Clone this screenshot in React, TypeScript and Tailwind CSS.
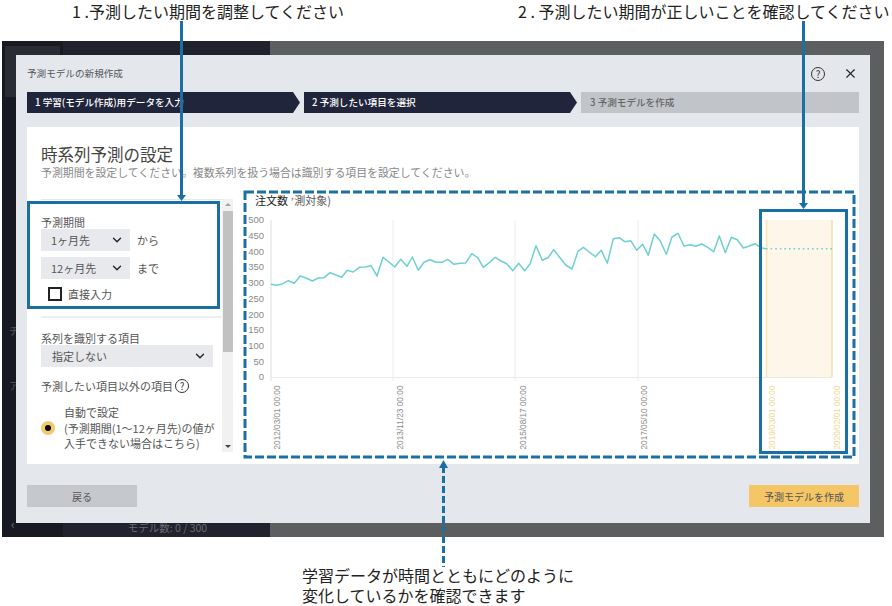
import { ChevronDown, X } from 'lucide-react'

const font = '[font-family:"Noto_Sans_CJK_JP","Liberation_Sans",sans-serif]'

const linePoints =
  '271,284.3 277,285.3 282.7,283.7 288.3,280.7 294.3,283.3 300.3,276 306,278 312.3,281 318.3,278 324,277.7 330,272.7 336,275 341.7,277.3 347.3,270.3 353.3,272 359.3,267.3 365,267 371,265.7 377,276 383,257.3 389,262 394.7,267 400.7,259.3 407,266.3 412.3,257 418.3,270.3 424,262.3 430,259.7 436,262.3 442,262.3 447.7,259.3 454,264.3 460,263.3 465.7,263 471.7,253.7 477.7,257.7 483.3,267.3 489.3,262.7 495,257.3 501,261 506.7,263.7 512.7,270.7 518.7,263.3 524.7,270.7 530,264 536,245.7 542.3,260.3 548,257.7 553.7,249.7 560,257.7 565.7,265 572,269 578,251.3 583.3,247.3 589.3,252 595.3,256.7 601.3,250.3 607.3,263.3 613.3,238.7 619.3,237.7 624.7,241.7 630.7,240.7 636.7,250.3 642.7,244.3 648.3,255.3 654.3,234 660.3,241 666.3,254.3 672,237 678,233.3 684,246 690,244.7 695.7,246.3 701.7,244 707.7,247.3 713.7,251.7 719.3,236 725.3,252.7 731.3,237.3 737.3,239.7 743.3,248 749.3,246 755,243.7 761,247.7 766,248.7'

const yTicks = [500, 450, 400, 350, 300, 250, 200, 150, 100, 50, 0]
const gridLines = [393, 515, 638]
const xLabels = [
  { x: 279.5, text: '2012/03/01 00:00', color: '#8a8a8a' },
  { x: 402.5, text: '2013/11/23 00:00', color: '#8a8a8a' },
  { x: 525.5, text: '2015/08/17 00:00', color: '#8a8a8a' },
  { x: 646.5, text: '2017/05/10 00:00', color: '#8a8a8a' },
  { x: 775, text: '2019/03/01 00:00', color: '#f3d48c' },
  { x: 840, text: '2020/02/01 00:00', color: '#f3d48c' },
]

function Chart() {
  return (
    <svg width="611" height="266" viewBox="244 192 611 266" className="ml-[11px] shrink-0">
      <rect x="766" y="220" width="66" height="157" fill="#fdf6e9" />
      <line x1="766.5" y1="220" x2="766.5" y2="377" stroke="#f9e3ae" strokeWidth="1.5" />
      <line x1="832" y1="220" x2="832" y2="377" stroke="#f0dfb4" strokeWidth="1.5" />
      <line x1="271" y1="220" x2="271" y2="381" stroke="#e8e8e8" strokeWidth="1.5" />
      {gridLines.map((x) => (
        <line key={x} x1={x} y1="220" x2={x} y2="381" stroke="#ececec" />
      ))}
      <line x1="271" y1="377.5" x2="832" y2="377.5" stroke="#e8e8e8" />
      <polyline points={linePoints} fill="none" stroke="#6fd0d2" strokeWidth="1.5" strokeLinejoin="round" />
      <line x1="766" y1="248.7" x2="832" y2="248.7" stroke="#6fd0d2" strokeWidth="1.5" strokeDasharray="1.6 3" />
      {yTicks.map((tick, i) => (
        <text key={tick} x="264" y={223.2 + i * 15.72} textAnchor="end" fontSize="9.5" fill="#8a8a8a" fontFamily="Liberation Sans">
          {tick}
        </text>
      ))}
      {xLabels.map((label) => (
        <text
          key={label.text}
          transform={`translate(${label.x} 385.5) rotate(-90)`}
          textAnchor="end"
          fontSize="9.6"
          textLength="64"
          lengthAdjust="spacingAndGlyphs"
          fill={label.color}
          fontFamily="Liberation Sans"
        >
          {label.text}
        </text>
      ))}
      <text x="255" y="204.5" fontSize="11" fill="#222" fontFamily="Noto Sans CJK JP">
        注文数 <tspan fill="#555">ʼ測対象)</tspan>
      </text>
    </svg>
  )
}

function SelectBox({ label, width, pad }: { label: string; width: string; pad: string }) {
  return (
    <div className={`flex h-[22px] items-center justify-between bg-[#e7e9ed] pr-[6px] text-[11px] text-[#555] ${width} ${pad}`}>
      <span>{label}</span>
      <ChevronDown size={14} strokeWidth={2.4} className="text-[#222]" />
    </div>
  )
}

function HelpIcon({ size, text }: { size: string; text: string }) {
  return (
    <span className={`flex items-center justify-center rounded-full border border-[#333] leading-none text-[#333] ${size} ${text}`}>?</span>
  )
}

function SettingsColumn() {
  return (
    <div className="relative mt-[7px] h-[253px] w-[192px] shrink-0 overflow-hidden text-[11px] text-[#555]">
      <div className="w-[181px] border-t border-[#e8e8e8]">
        <div className="w-[172px]">
          <p className="mt-[15px] h-[14px] leading-[14px]">予測期間</p>
          <div className="flex items-center gap-[7px]">
            <SelectBox label="1ヶ月先" width="w-[89px]" pad="pl-[10px]" />
            <span>から</span>
          </div>
          <div className="mt-[6px] flex items-center gap-[7px]">
            <SelectBox label="12ヶ月先" width="w-[89px]" pad="pl-[10px]" />
            <span>まで</span>
          </div>
          <div className="mt-[8px] flex items-center gap-[6px] pl-[7px]">
            <span className="h-[14px] w-[14px] border-2 border-[#222] bg-white" />
            <span className="leading-[14px]">直接入力</span>
          </div>
        </div>
        <div className="mt-[15px] border-t-2 border-[#eeeeee]" />
        <div className="w-[172px]">
          <p className="mt-[13px] h-[14px] leading-[14px]">系列を識別する項目</p>
          <SelectBox label="指定しない" width="w-[172px]" pad="pl-[11px]" />
          <div className="mt-[12px] flex h-[14px] items-center gap-[2px]">
            <span>予測したい項目以外の項目</span>
            <HelpIcon size="h-[14px] w-[14px]" text="text-[10px]" />
          </div>
          <div className="mt-[12px] flex items-center gap-[9px] pl-0 leading-[15.5px]">
            <span className="flex h-[14px] w-[14px] shrink-0 items-center justify-center rounded-full bg-[#f4c872]">
              <span className="h-[6px] w-[6px] rounded-full bg-black" />
            </span>
            <p className="whitespace-nowrap">
              自動で設定
              <br />
              (予測期間(1〜12ヶ月先)の値が
              <br />
              入手できない場合はこちら)
            </p>
          </div>
        </div>
      </div>
      <div className="absolute top-0 right-0 flex h-full w-[11px] flex-col items-center justify-between bg-[#f1f1f1] py-[4px]">
        <span className="h-0 w-0 border-x-[3px] border-b-[3px] border-x-transparent border-b-[#a3a3a3]" />
        <span className="absolute top-[12px] left-[1px] h-[141px] w-[10px] bg-[#c1c1c1]" />
        <span className="h-0 w-0 border-x-[3px] border-t-[3px] border-x-transparent border-t-[#444]" />
      </div>
    </div>
  )
}

function Modal() {
  return (
    <div className="absolute top-[14px] left-[14px] flex h-[468px] w-[854px] flex-col bg-[#e4e7ec] px-[11px]">
      <div className="flex h-[37px] items-center justify-between">
        <span className="text-[9.6px] text-[#555]">予測モデルの新規作成</span>
        <div className="flex items-center gap-[18px] pr-[1px]">
          <HelpIcon size="h-[14px] w-[14px]" text="text-[10px]" />
          <X size={15} strokeWidth={1.8} className="text-[#222]" />
        </div>
      </div>
      <div className="flex h-[21px] gap-[4px] text-[9.6px] font-medium">
        <div className="flex w-[273px] items-center bg-[#20253b] pl-[8px] text-white [clip-path:polygon(0_0,266px_0,100%_50%,266px_100%,0_100%)]">
          1 学習(モデル作成)用データを入力
        </div>
        <div className="flex w-[273px] items-center bg-[#20253b] pl-[8px] text-white [clip-path:polygon(0_0,266px_0,100%_50%,266px_100%,0_100%)]">
          2 予測したい項目を選択
        </div>
        <div className="flex flex-1 items-center bg-[#c1c4c9] pl-[9px] text-[#666]">3 予測モデルを作成</div>
      </div>
      <div className="mt-[14px] h-[337px] bg-white px-[14px] pt-[15px]">
        <h2 className="h-[24px] text-[16.5px] leading-[24px] font-normal text-[#444]">時系列予測の設定</h2>
        <p className="-mt-[2px] h-[16px] text-[10.9px] leading-[16px] text-[#888]">
          予測期間を設定してください。複数系列を扱う場合は識別する項目を設定してください。
        </p>
        <div className="mt-[12px] flex">
          <SettingsColumn />
          <Chart />
        </div>
      </div>
      <div className="mt-[21px] flex justify-between text-[10px]">
        <button className="h-[22px] w-[110px] bg-[#c6c8cc] text-[#555]">戻る</button>
        <button className="h-[22px] w-[110px] bg-[#f4c665] text-[#555]">予測モデルを作成</button>
      </div>
    </div>
  )
}

function Annotations() {
  return (
    <>
      <svg width="892" height="606" className="pointer-events-none absolute inset-0">
        <g fill="none" stroke="#1a6fa5">
          <rect x="28.5" y="202.5" width="190" height="105" strokeWidth="3" />
          <rect x="760.5" y="210.5" width="86" height="242" strokeWidth="3" />
          <rect x="245" y="192" width="609" height="265" strokeWidth="3" strokeDasharray="9 3" />
          <line x1="181.5" y1="21" x2="181.5" y2="196" strokeWidth="3" />
          <line x1="803.5" y1="21" x2="803.5" y2="204" strokeWidth="3" />
          <line x1="443.5" y1="466" x2="443.5" y2="567" strokeWidth="3" strokeDasharray="7 3" />
        </g>
        <g fill="#1a6fa5">
          <polygon points="177,195 186,195 181.5,201" />
          <polygon points="799,203 808,203 803.5,209" />
          <polygon points="439,468 448,468 443.5,460" />
        </g>
      </svg>
      <p className="absolute top-[-1px] left-[72px] text-[16px] leading-[24px] whitespace-nowrap text-[#222]">1 .予測したい期間を調整してください</p>
      <p className="absolute top-[-1px] left-[518px] text-[16px] leading-[24px] whitespace-nowrap text-[#222]">2 . 予測したい期間が正しいことを確認してください</p>
      <p className="absolute top-[565px] left-[302px] text-[16px] leading-[20px] whitespace-nowrap text-[#222]">
        学習データが時間とともにどのように
        <br />
        変化しているかを確認できます
      </p>
    </>
  )
}

export default function App() {
  return (
    <div className={`relative h-[606px] w-[892px] overflow-hidden bg-white pt-[41px] pl-[2px] ${font}`}>
      <div className="relative flex h-[496px] w-[882px]">
        <div className="flex w-[61px] flex-col bg-[#171a22] text-[#55575d]">
          <div className="mt-[5px] ml-[3px] h-[51px] w-[55px] bg-[#2a2c33]" />
          <span className="mt-[226px] ml-[7px] text-[10px]">チ</span>
          <span className="mt-[40px] ml-[7px] text-[10px]">ア</span>
          <span className="mt-auto mb-[4px] ml-[9px] text-[12px] text-[#777]">‹</span>
        </div>
        <div className="flex w-[207px] items-end justify-center bg-[#20222e] pb-[1px] pl-[2px] text-[10.5px] text-[#6b6c72]">モデル数: 0 / 300</div>
        <div className="flex-1 bg-[#5d5e60]" />
        <Modal />
      </div>
      <Annotations />
    </div>
  )
}
